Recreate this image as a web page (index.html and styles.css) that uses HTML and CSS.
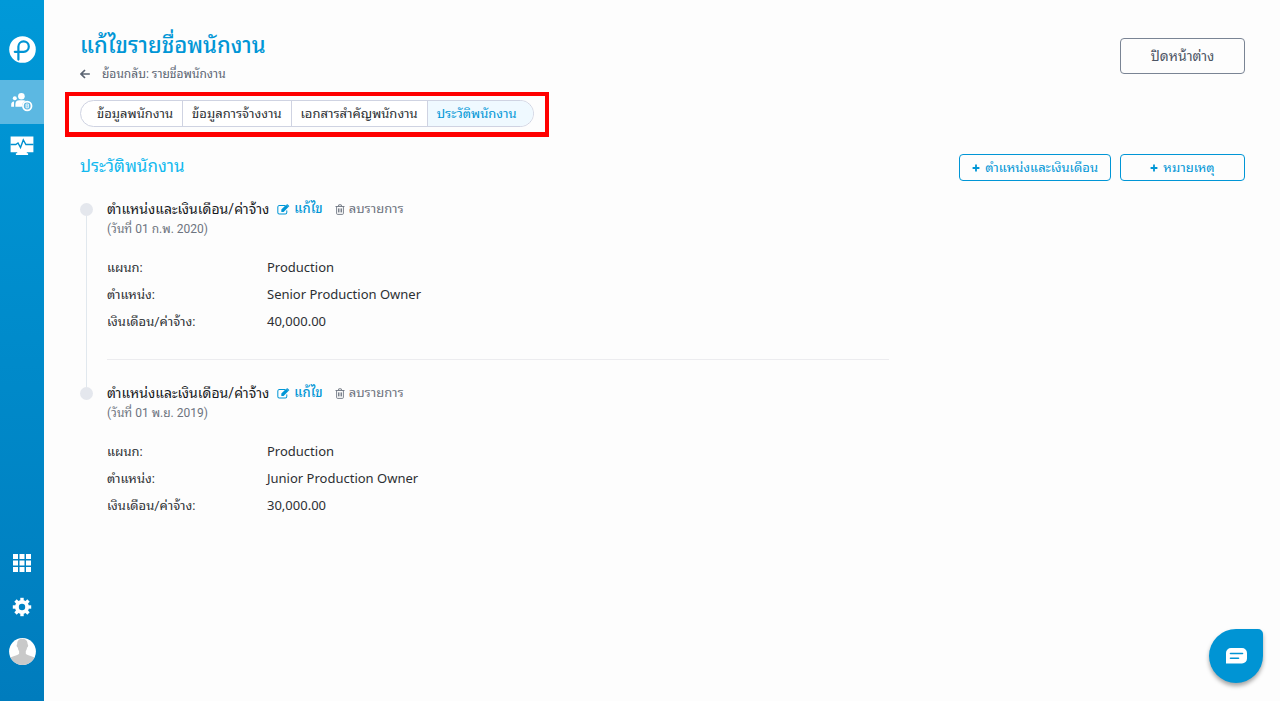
FILE: index.html
```html
<!DOCTYPE html>
<html lang="th">
<head>
<meta charset="utf-8">
<meta name="viewport" content="width=device-width, initial-scale=1">
<title>แก้ไขรายชื่อพนักงาน</title>
<link rel="stylesheet" href="styles.css">
</head>
<body>
<svg class="symbols" aria-hidden="true">
  <symbol id="edit" viewBox="0 0 14 12"><path d="M10.600 7.400v1.900a1.600 1.600 0 0 1-1.600 1.600H2.400A1.600 1.600 0 0 1 .8 9.300V3.300a1.600 1.600 0 0 1 1.600-1.600H8.400" fill="none" stroke="currentColor" stroke-width="1.100" stroke-linecap="round"/><path d="M4.600 8.600V6.100L9.900.9l2.500 2.500-5.300 5.200z" fill="currentColor"/><path d="M10.500.5q.6-.6 1.200 0l1.300 1.300q.5.600 0 1.100l-.4.400L10.100.9z" fill="currentColor"/></symbol>
  <symbol id="trash" viewBox="0 0 10 11"><path d="M.5 2.500h9M3.300 2.300l.5-1.500h2.400l.5 1.500M1.600 2.600v6.800q0 1 1 1h4.800q1 0 1-1V2.600M3.500 4.400v4M5 4.400v4M6.500 4.400v4" fill="none" stroke="currentColor" stroke-width="0.900"/></symbol>
  <symbol id="plus" viewBox="0 0 8 8"><path d="M4 .6v6.800M.6 4h6.800" stroke="currentColor" stroke-width="1.800"/></symbol>
</svg>
<div class="app">
  <nav class="sidebar" aria-label="เมนูหลัก">
    <div class="nav-group">
      <a class="brand" href="#" aria-label="หน้าแรก">
        <svg width="27" height="27" viewBox="0 0 27 27"><circle cx="13.500" cy="13.500" r="13.300" fill="#fff"/><path d="M5.800 15.800h8.900a5.200 5.200 0 1 0-5.300-5.200v13" fill="none" stroke="#0094d4" stroke-width="2.200" stroke-linecap="round"/></svg>
      </a>
      <a class="nav-item active" href="#" aria-label="พนักงาน">
        <svg width="22" height="20" viewBox="0 0 22 20"><g fill="#fff"><circle cx="3.800" cy="6.300" r="2"/><circle cx="10.400" cy="4.200" r="3.300"/><path d="M.2 14.800v-2.300q0-2.600 2.800-3L3 14.800zM4.400 14.800v-2.600q0-4 4-4h4q1.500 0 2.400.8-4 1.700-3.900 5.800z"/></g><circle cx="16.200" cy="14" r="4.300" fill="none" stroke="#fff" stroke-width="1.800"/><path d="M15 12h2.400v3.800H15zM15 13.900h2.400" fill="none" stroke="#fff" stroke-width=".8"/></svg>
      </a>
      <a class="nav-item" href="#" aria-label="ภาพรวม">
        <svg width="24" height="20" viewBox="0 0 24 20"><path d="M.6.500h22.800v15.800h-6.600v1h1.300v1.800H5.900v-1.800h1.300v-1H.6z" fill="#fff"/><path d="M.5 8.500h5.300L8 7l2.500 4.500L13.300 4l2.600 4.500h7.600" fill="none" stroke="#0090d0" stroke-width="1.400"/></svg>
      </a>
    </div>
    <div class="nav-group">
      <a class="nav-item" href="#" aria-label="แอปทั้งหมด">
        <svg width="18" height="18" viewBox="0 0 18 18" fill="#fff"><path d="M0 0h5v5H0zM6.500 0h5v5h-5zM13 0h5v5h-5zM0 6.500h5v5H0zM6.500 6.500h5v5h-5zM13 6.500h5v5h-5zM0 13h5v5H0zM6.500 13h5v5h-5zM13 13h5v5h-5z"/></svg>
      </a>
      <a class="nav-item" href="#" aria-label="ตั้งค่า">
        <svg width="20" height="20" viewBox="0 0 20 20"><g fill="#fff"><path d="M8.300.8h3.400v18.400H8.300z"/><path d="M8.300.8h3.400v18.400H8.300z" transform="rotate(45 10 10)"/><path d="M8.300.8h3.400v18.400H8.300z" transform="rotate(90 10 10)"/><path d="M8.300.8h3.400v18.400H8.300z" transform="rotate(135 10 10)"/><circle cx="10" cy="10" r="7"/></g><circle cx="10" cy="10" r="3.200" fill="#0083c4"/></svg>
      </a>
      <a class="nav-item" href="#" aria-label="โปรไฟล์">
        <svg width="27" height="27" viewBox="0 0 27 27"><clipPath id="face"><circle cx="13.500" cy="13.500" r="13.400"/></clipPath><g clip-path="url(#face)"><path d="M0 0h27v27H0z" fill="#fff"/><path d="M13.300.8c4 0 5.400 2.500 5.300 5.500 1 .2.700 3-.5 3.300-.3 1.800-.8 2.800-1.300 3.500v2.600c.8 1.500 7 2.300 9.200 4.300V27H1v-7c2.200-2 8.300-2.800 9.100-4.300v-2.600C9.500 12.400 9 11.400 8.800 9.600 7.500 9.300 7.200 6.500 8.200 6.300 8 3.300 9.300.8 13.300.8z" fill="#c9c9c9"/></g></svg>
      </a>
    </div>
  </nav>

  <main class="content">
    <header class="page-head">
      <div>
        <h1>แก้ไขรายชื่อพนักงาน</h1>
        <a class="back" href="#"><svg width="10" height="10" viewBox="0 0 10 10"><path d="M9.800 5H1.200M5 1 1 5l4 4" fill="none" stroke="currentColor" stroke-width="1.700"/></svg>ย้อนกลับ: รายชื่อพนักงาน</a>
      </div>
      <button class="btn btn-close" type="button">ปิดหน้าต่าง</button>
    </header>

    <div class="highlight">
      <nav class="tabs" aria-label="ข้อมูล">
        <a href="#">ข้อมูลพนักงาน</a>
        <a href="#">ข้อมูลการจ้างงาน</a>
        <a href="#">เอกสารสำคัญพนักงาน</a>
        <a class="selected" href="#" aria-current="page">ประวัติพนักงาน</a>
      </nav>
    </div>

    <section>
      <div class="section-head">
        <h2>ประวัติพนักงาน</h2>
        <div class="actions">
          <button class="btn btn-add" type="button"><svg width="8" height="8"><use href="#plus"/></svg>ตำแหน่งและเงินเดือน</button>
          <button class="btn btn-add btn-note" type="button"><svg width="8" height="8"><use href="#plus"/></svg>หมายเหตุ</button>
        </div>
      </div>

      <ol class="timeline">
        <li class="entry">
          <div class="marker"></div>
          <article class="entry-body">
            <div class="entry-title">
              <h3>ตำแหน่งและเงินเดือน/ค่าจ้าง</h3>
              <button class="link edit" type="button"><svg width="13" height="11"><use href="#edit"/></svg>แก้ไข</button>
              <button class="link remove" type="button"><svg width="10" height="11"><use href="#trash"/></svg>ลบรายการ</button>
            </div>
            <p class="date">(วันที่ 01 ก.พ. 2020)</p>
            <dl>
              <dt>แผนก:</dt><dd>Production</dd>
              <dt>ตำแหน่ง:</dt><dd>Senior Production Owner</dd>
              <dt>เงินเดือน/ค่าจ้าง:</dt><dd>40,000.00</dd>
            </dl>
          </article>
        </li>
        <li class="entry">
          <div class="marker"></div>
          <article class="entry-body">
            <div class="entry-title">
              <h3>ตำแหน่งและเงินเดือน/ค่าจ้าง</h3>
              <button class="link edit" type="button"><svg width="13" height="11"><use href="#edit"/></svg>แก้ไข</button>
              <button class="link remove" type="button"><svg width="10" height="11"><use href="#trash"/></svg>ลบรายการ</button>
            </div>
            <p class="date">(วันที่ 01 พ.ย. 2019)</p>
            <dl>
              <dt>แผนก:</dt><dd>Production</dd>
              <dt>ตำแหน่ง:</dt><dd>Junior Production Owner</dd>
              <dt>เงินเดือน/ค่าจ้าง:</dt><dd>30,000.00</dd>
            </dl>
          </article>
        </li>
      </ol>
    </section>
  </main>
</div>
<button class="chat" type="button" aria-label="แชท">
  <svg width="21" height="16" viewBox="0 0 21 16"><path d="M5 0h11a5 5 0 0 1 5 5v5.500a5 5 0 0 1-5 5H0V5a5 5 0 0 1 5-5z" fill="#fff"/><path d="M4.500 5.500h12M4.500 10.300h8" stroke="#0094d4" stroke-width="1.600" stroke-linecap="round"/></svg>
</button>
</body>
</html>
```
FILE: styles.css
```css
* { box-sizing: border-box; }

body {
  margin: 0;
  background: #fdfdfd;
  color: #2c2f33;
  font: 13px/27px Roboto, "Noto Sans Thai Looped", "Noto Sans Thai", "Noto Sans", sans-serif;
}

h1, h2, h3, p, ol, dl, dd { margin: 0; padding: 0; font-weight: 400; }
ol { list-style: none; }
a { color: inherit; text-decoration: none; }
button { font: inherit; color: inherit; background: none; cursor: pointer; }
svg { flex: none; }
.symbols { display: none; }

.app { display: flex; min-height: 100vh; }

.sidebar {
  flex: 0 0 44px;
  display: flex;
  flex-direction: column;
  justify-content: space-between;
  padding: 18px 0 28px;
  background: linear-gradient(#0099d8, #007cbd);
}
.brand, .nav-item { display: flex; align-items: center; justify-content: center; }
.brand { height: 62px; align-items: flex-start; padding-top: 18px; }
.nav-item { height: 44px; }
.nav-item.active { background: #5cb8e2; }

.content { flex: 1; min-width: 0; padding: 30px 35px 30px 36px; }

.page-head { display: flex; justify-content: space-between; align-items: flex-start; }
h1 { color: #0096d6; font-size: 22px; line-height: 32px; font-weight: 500; }
.back { display: flex; align-items: center; gap: 12px; color: #5b6472; font-size: 12px; line-height: 24px; }

.btn { display: flex; align-items: center; justify-content: center; gap: 5px; border: 1px solid; border-radius: 4px; }
.btn-close { width: 125px; height: 36px; margin-top: 8px; color: #4d5665; border-color: #7a8494; font-size: 14px; }
.btn-add { height: 27px; padding: 0 12px; color: #0096d6; }
.btn-note { width: 125px; }

.highlight { display: flex; width: fit-content; margin: 6px 0 0 -15px; padding: 4px 11px 5px; border: 4px solid #f00; border-bottom-width: 5px; }
.tabs { display: flex; border: 1px solid #cfd3e2; border-radius: 14px; overflow: hidden; background: #fff; line-height: 25px; }
.tabs a { padding: 0 9px; }
.tabs a + a { border-left: 1px solid #cfd3e2; }
.tabs a:first-child { padding-left: 16px; }
.tabs a:last-child { padding-right: 16px; }
.tabs .selected { color: #0096d6; background: #eff9ff; }

.section-head { display: flex; justify-content: space-between; align-items: flex-start; margin-top: 17px; }
h2 { color: #12b9ef; font-size: 17px; line-height: 24px; }
.actions { display: flex; gap: 9px; }

.timeline { width: 70%; max-width: 809px; margin-top: 18px; }
.entry { display: flex; gap: 14px; }
.marker { flex: 0 0 13px; display: flex; flex-direction: column; align-items: center; margin: 4px 0 -4px; }
.marker::before { content: ""; width: 13px; height: 13px; border-radius: 50%; background: #e4e7ed; }
.entry:not(:last-child) .marker::after { content: ""; flex: 1; width: 1px; background: #e1e8ee; }
.entry-body { flex: 1; }
.entry:not(:last-child) .entry-body { border-bottom: 1px solid #ececef; margin-bottom: 23px; padding-bottom: 24px; }
.entry-title { display: flex; align-items: center; line-height: 20px; color: #17191c; }
h3 { font-size: 14px; }
.link { display: flex; align-items: center; gap: 4px; padding: 0; border: 0; }
.edit { margin-left: 8px; color: #0096d6; font-weight: 500; }
.remove { margin-left: 12px; color: #6d7480; }
.date { color: #6d7480; font-size: 12px; line-height: 20px; }
dl { display: grid; grid-template-columns: 160px 1fr; margin-top: 15px; }
dd { font-family: "Noto Sans", sans-serif; }

.chat {
  position: fixed;
  right: 17px;
  bottom: 18px;
  width: 54px;
  height: 54px;
  display: flex;
  align-items: center;
  justify-content: center;
  border: 0;
  border-radius: 50% 5px 50% 50%;
  background: #0094d4;
  box-shadow: 0 3px 4px rgba(0, 0, 0, .35);
}
```
